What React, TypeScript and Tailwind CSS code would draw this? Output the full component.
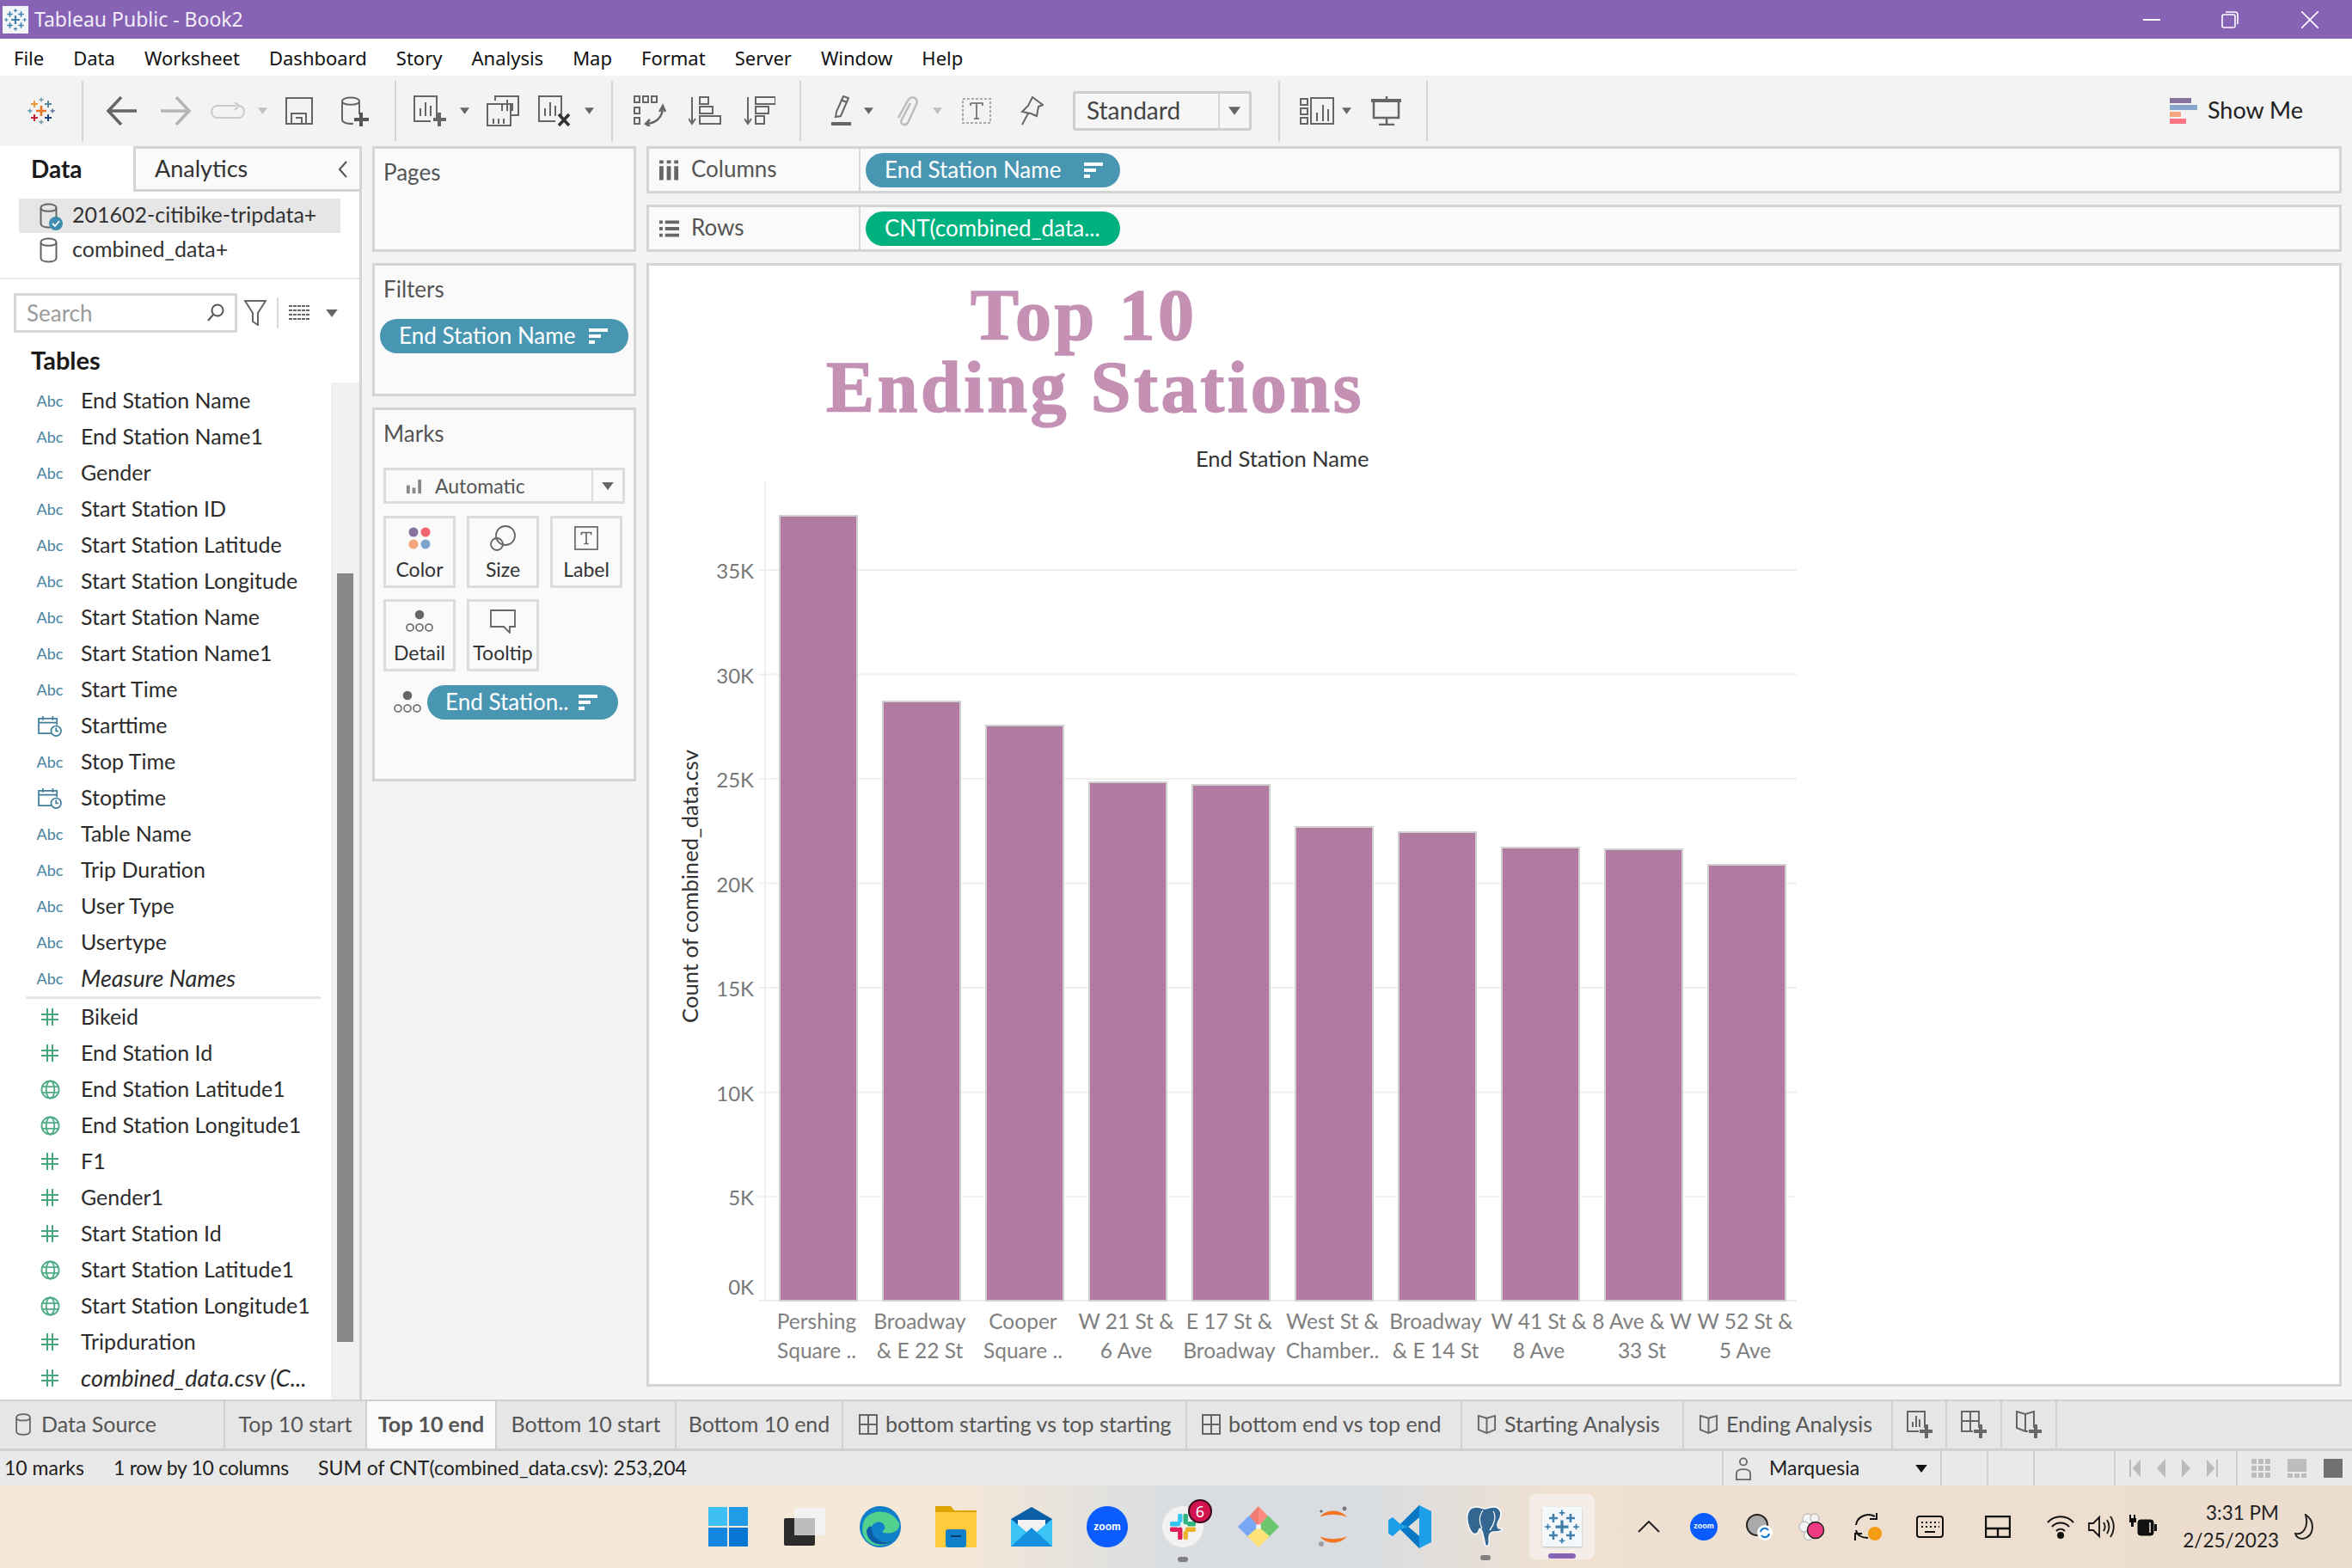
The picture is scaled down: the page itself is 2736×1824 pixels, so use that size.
import React from "react";

const FONT = "font-['Lato','Liberation_Sans',sans-serif]";
const UI = "font-['Noto_Sans','Liberation_Sans',sans-serif]";
const ICON = "#666666";

function Cross({ x, y, s, w, c }: { x: number; y: number; s: number; w: number; c: string }) {
  return <path d={`M${x - s} ${y}H${x + s}M${x} ${y - s}V${y + s}`} stroke={c} strokeWidth={w} fill="none" />;
}

function TableauLogo({ mono, className }: { mono?: string; className: string }) {
  const c = (v: string) => mono ?? v;
  return (
    <svg viewBox="0 0 32 32" className={className}>
      <Cross x={16} y={16} s={6} w={2.6} c={c("#e8762c")} />
      <Cross x={8} y={8} s={4} w={2} c={c("#eb9a35")} />
      <Cross x={24} y={8} s={4} w={2} c={c("#5b879b")} />
      <Cross x={8} y={24} s={4} w={2} c={c("#c72035")} />
      <Cross x={24} y={24} s={4} w={2} c={c("#1f447a")} />
      <Cross x={16} y={3} s={2.6} w={1.4} c={c("#7099a6")} />
      <Cross x={16} y={29} s={2.6} w={1.4} c={c("#7099a6")} />
      <Cross x={2.8} y={16} s={2.6} w={1.4} c={c("#5b9bb5")} />
      <Cross x={29.2} y={16} s={2.6} w={1.4} c={c("#5b6f9b")} />
    </svg>
  );
}

function Caret({ c = ICON, className = "w-[12px] h-[8px]" }: { c?: string; className?: string }) {
  return (
    <svg viewBox="0 0 12 8" className={className}>
      <path d="M0 0H12L6 8Z" fill={c} />
    </svg>
  );
}

function Sep({ className }: { className: string }) {
  return <div className={`w-[2px] h-[70px] bg-[#d4d4d4] shrink-0 ${className}`} />;
}

function Cylinder({ className, c = ICON }: { className: string; c?: string }) {
  return (
    <svg viewBox="0 0 20 32" className={className} fill="none" stroke={c} strokeWidth="2">
      <path d="M1 7C1 1 19 1 19 7V25C19 31 1 31 1 25Z" />
      <path d="M1 7C1 12 19 12 19 7" />
    </svg>
  );
}

function SortBars({ c = "#ffffff" }: { c?: string }) {
  return (
    <svg viewBox="0 0 22 18" className="w-[22px] h-[18px] shrink-0">
      <rect x="0" y="0" width="22" height="4" fill={c} />
      <rect x="0" y="7" width="14" height="4" fill={c} />
      <rect x="0" y="14" width="7" height="4" fill={c} />
    </svg>
  );
}

function BarsSheet({ mark }: { mark: "plus" | "x" }) {
  return (
    <svg viewBox="0 0 38 36" className="w-[38px] h-[36px]" fill="none" stroke={ICON} strokeWidth="2">
      <path d="M27 27V1H1V30H20" />
      <path d="M8 24V15M14 24V8M20 24V12" />
      {mark === "plus" ? (
        <path d="M30 20V36M23 28H38" strokeWidth="4" />
      ) : (
        <path d="M24 22L36 35M36 22L24 35" strokeWidth="3.5" stroke="#333" />
      )}
    </svg>
  );
}

function Toolbar() {
  return (
    <div className="h-[81px] bg-[#f3f3f3] flex items-center shrink-0 pl-[32px]">
      <TableauLogo className="w-[32px] h-[32px]" />
      <Sep className="ml-[31px]" />
      <svg viewBox="0 0 36 34" className="w-[36px] h-[34px] ml-[26px]" fill="none" stroke={ICON} strokeWidth="3.5">
        <path d="M36 17H3M18 1L3 17L18 33" />
      </svg>
      <svg viewBox="0 0 36 34" className="w-[36px] h-[34px] ml-[28px]" fill="none" stroke="#b4b4b4" strokeWidth="3.5">
        <path d="M0 17H33M18 1L33 17L18 33" />
      </svg>
      <svg viewBox="0 0 40 20" className="w-[40px] h-[20px] ml-[22px]" fill="none" stroke="#c8c8c8" strokeWidth="2">
        <path d="M30 4H8C-1 4 -1 18 8 18H32C41 18 41 4 33 4M28 0L33 4L28 9" />
      </svg>
      <Caret c="#c0c0c0" className="w-[11px] h-[8px] ml-[15px]" />
      <svg viewBox="0 0 32 32" className="w-[32px] h-[32px] ml-[21px]" fill="none" stroke={ICON} strokeWidth="2">
        <path d="M1 1H31V31H1Z" />
        <path d="M7 31V19H24V31M12 24H19V31" />
      </svg>
      <svg viewBox="0 0 32 36" className="w-[32px] h-[36px] ml-[33px]" fill="none" stroke={ICON} strokeWidth="2">
        <path d="M1 7C1 1 21 1 21 7V22M1 7C1 12 21 12 21 7M1 7V28C1 32 8 33 14 33" />
        <path d="M23 20V36M15 28H32" strokeWidth="4" stroke="#555" />
      </svg>
      <Sep className="ml-[30px]" />
      <div className="ml-[20px]"><BarsSheet mark="plus" /></div>
      <Caret className="w-[11px] h-[8px] ml-[16px]" />
      <svg viewBox="0 0 38 36" className="w-[38px] h-[36px] ml-[20px]" fill="none" stroke={ICON} strokeWidth="2">
        <path d="M10 6V1H37V23H28M1 10H28V35H1Z" />
        <path d="M18 18V10M24 18V5M30 18V9M8 33V27M14 33V27M20 33V27" />
      </svg>
      <div className="ml-[22px]"><BarsSheet mark="x" /></div>
      <Caret className="w-[11px] h-[8px] ml-[16px]" />
      <Sep className="ml-[20px]" />
      <svg viewBox="0 0 38 36" className="w-[38px] h-[36px] ml-[24px]" fill="none" stroke={ICON} strokeWidth="2">
        <path d="M1 1H7V8H1ZM11 1H17V8H11ZM21 1H27V8H21ZM1 14H7V21H1ZM1 26H7V33H1Z" />
        <path d="M15 33C26 32 33 26 34 15M30 19L34 12L37 19M19 28L14 33L19 36" strokeWidth="2.5" />
      </svg>
      <svg viewBox="0 0 38 34" className="w-[38px] h-[34px] ml-[26px]" fill="none" stroke={ICON} strokeWidth="2">
        <path d="M4 1V30M0 26L4 32L8 26" />
        <path d="M13 1H23V9H13ZM13 12H28V20H13ZM13 23H37V32H13Z" />
      </svg>
      <svg viewBox="0 0 36 34" className="w-[36px] h-[34px] ml-[27px]" fill="none" stroke={ICON} strokeWidth="2">
        <path d="M4 1V30M0 26L4 32L8 26" />
        <path d="M13 1H36V9H13ZM13 12H28V20H13ZM13 23H23V32H13Z" />
      </svg>
      <Sep className="ml-[28px]" />
      <svg viewBox="0 0 26 36" className="w-[26px] h-[36px] ml-[33px]" fill="none" stroke={ICON} strokeWidth="2">
        <path d="M16 1L22 3L13 24L7 25L8 19ZM13 5L20 8" />
        <path d="M2 33H25" strokeWidth="4" />
      </svg>
      <Caret className="w-[11px] h-[8px] ml-[14px]" />
      <svg viewBox="0 0 28 36" className="w-[28px] h-[36px] ml-[24px]" fill="none" stroke="#bcbcbc" strokeWidth="2.5">
        <path d="M19 9L9 28C6 34 14 37 17 30L26 10C29 3 20 -1 16 6L5 26" />
      </svg>
      <Caret c="#c0c0c0" className="w-[11px] h-[8px] ml-[17px]" />
      <svg viewBox="0 0 34 30" className="w-[34px] h-[30px] ml-[23px]" fill="none">
        <rect x="1" y="1" width="32" height="28" stroke="#aaa" strokeWidth="2" strokeDasharray="3 2" />
        <path d="M10 6H24V9M10 6V9M17 6V24M14 24H20" stroke="#666" strokeWidth="1.6" />
      </svg>
      <svg viewBox="0 0 28 34" className="w-[28px] h-[34px] ml-[33px]" fill="none" stroke={ICON} strokeWidth="2">
        <path d="M15 1L27 10L22 12L20 23L13 20L3 18L10 11ZM10 20L3 33" />
      </svg>
      <div className="ml-[34px] w-[208px] h-[46px] border-[3px] border-[#cfcfcf] rounded-[3px] flex items-center bg-[#f6f6f6]">
        <span className={`${FONT} text-[28px] text-[#444] pl-[13px] flex-1 -mt-[2px]`}>Standard</span>
        <div className="w-[36px] h-full border-l-2 border-[#d8d8d8] flex items-center justify-center">
          <Caret className="w-[14px] h-[10px]" />
        </div>
      </div>
      <Sep className="ml-[31px]" />
      <svg viewBox="0 0 40 32" className="w-[40px] h-[32px] ml-[23px]" fill="none" stroke={ICON} strokeWidth="2">
        <path d="M1 2H9V9H1ZM1 13H9V20H1ZM1 24H9V31H1ZM13 1H39V31H13Z" />
        <path d="M20 28V18M27 28V9M33 28V14" />
      </svg>
      <Caret className="w-[11px] h-[8px] ml-[9px]" />
      <svg viewBox="0 0 36 34" className="w-[36px] h-[34px] ml-[23px]" fill="none" stroke={ICON} strokeWidth="2.5">
        <path d="M0 5H35" strokeWidth="4" />
        <path d="M3 7V25H32V7M18 0V3M18 25V33M9 33H27" />
      </svg>
      <Sep className="ml-[28px]" />
      <div className="ml-auto mr-[57px] flex items-center gap-[12px]">
        <svg viewBox="0 0 32 30" className="w-[32px] h-[30px]">
          <rect x="0" y="0" width="25" height="6" fill="#86729a" />
          <rect x="0" y="8" width="32" height="6" fill="#86a5c9" />
          <rect x="0" y="16" width="13" height="6" fill="#f4a77f" />
          <rect x="0" y="24" width="19" height="6" fill="#fb7485" />
        </svg>
        <span className={`${FONT} text-[27px] text-[#222]`}>Show Me</span>
      </div>
    </div>
  );
}

const stringFields = ["End Station Name", "End Station Name1", "Gender", "Start Station ID", "Start Station Latitude", "Start Station Longitude", "Start Station Name", "Start Station Name1", "Start Time", "Starttime", "Stop Time", "Stoptime", "Table Name", "Trip Duration", "User Type", "Usertype", "Measure Names"];
const numberFields = ["Bikeid", "End Station Id", "End Station Latitude1", "End Station Longitude1", "F1", "Gender1", "Start Station Id", "Start Station Latitude1", "Start Station Longitude1", "Tripduration", "combined_data.csv (C..."];
const geoFields = ["End Station Latitude1", "End Station Longitude1", "Start Station Latitude1", "Start Station Longitude1"];

function FieldIcon({ name, measure }: { name: string; measure: boolean }) {
  if (measure && geoFields.includes(name)) {
    return (
      <svg viewBox="0 0 24 24" className="w-[23px] h-[23px]" fill="none" stroke="#4fac87" strokeWidth="2">
        <circle cx="12" cy="12" r="10.5" />
        <ellipse cx="12" cy="12" rx="5" ry="10.5" />
        <path d="M2 8.5H22M2 15.5H22" />
      </svg>
    );
  }
  if (measure) {
    return (
      <svg viewBox="0 0 20 20" className="w-[20px] h-[20px]" fill="none" stroke="#4aa57e" strokeWidth="2">
        <path d="M7 0V20M13 0V20M0 7H20M0 13H20" />
      </svg>
    );
  }
  if (name === "Starttime" || name === "Stoptime") {
    return (
      <svg viewBox="0 0 30 26" className="w-[29px] h-[25px]" fill="none" stroke="#3f7f9c" strokeWidth="1.8">
        <path d="M16 22H1V4H23V12M1 9H23M6 1V6M18 1V6" />
        <circle cx="22" cy="19" r="6" fill="#ffffff" />
        <path d="M22 15V19H25" />
      </svg>
    );
  }
  return <span className={`${FONT} text-[18px] text-[#4682a0]`}>Abc</span>;
}

function Field({ name, measure }: { name: string; measure: boolean }) {
  const italic = name === "Measure Names" || name.startsWith("combined_data");
  return (
    <div className="h-[42px] flex items-center">
      <div className="w-[36px] ml-[40px] flex justify-center shrink-0">
        <FieldIcon name={name} measure={measure} />
      </div>
      <span className={`${FONT} text-[#2b2b2b] ml-[18px] whitespace-nowrap ${italic ? "italic text-[27px]" : "text-[25px]"}`}>{name}</span>
    </div>
  );
}

function LeftPanel() {
  return (
    <div className="w-[421px] shrink-0 bg-white border-r-[3px] border-[#d4d4d4] flex flex-col">
      <div className="h-[53px] flex shrink-0">
        <div className={`${FONT} w-[155px] pl-[36px] pb-[2px] flex items-center text-[28px] font-bold text-[#1a1a1a]`}>Data</div>
        <div className={`${FONT} flex-1 bg-[#fafafa] border-l-[3px] border-t-[3px] border-b-[3px] border-[#d4d4d4] pl-[22px] pr-[14px] flex items-center justify-between text-[27px] text-[#333]`}>
          <span>Analytics</span>
          <svg viewBox="0 0 10 20" className="w-[10px] h-[20px]" fill="none" stroke="#555" strokeWidth="2">
            <path d="M9 1L1 10L9 19" />
          </svg>
        </div>
      </div>
      <div className="mt-[8px] mx-[22px] h-[40px] bg-[#e6e6e6] flex items-center pl-[23px] relative">
        <Cylinder className="w-[23px] h-[32px]" />
        <svg viewBox="0 0 16 16" className="w-[16px] h-[16px] absolute left-[35px] top-[21px]">
          <circle cx="8" cy="8" r="8" fill="#3e8cae" />
          <path d="M4 8L7 11L12 5" stroke="#fff" strokeWidth="1.8" fill="none" />
        </svg>
        <span className={`${FONT} text-[25px] text-[#333] ml-[16px] -mt-[2px]`}>201602-citibike-tripdata+</span>
      </div>
      <div className="mx-[22px] h-[40px] flex items-center pl-[23px]">
        <Cylinder className="w-[23px] h-[32px]" />
        <span className={`${FONT} text-[25px] text-[#333] ml-[16px] -mt-[2px]`}>combined_data+</span>
      </div>
      <div className="mt-[12px] h-[2px] bg-[#e8e8e8] shrink-0" />
      <div className="mt-[16px] h-[46px] flex items-center pl-[16px] shrink-0">
        <div className="w-[260px] h-full border-[3px] border-[#d6d6d6] rounded-[2px] flex items-center justify-between px-[12px]">
          <span className={`${FONT} text-[26px] text-[#9b9b9b]`}>Search</span>
          <svg viewBox="0 0 20 22" className="w-[20px] h-[22px]" fill="none" stroke="#555" strokeWidth="2">
            <circle cx="12" cy="8" r="6.5" />
            <path d="M7 13L1 20" />
          </svg>
        </div>
        <svg viewBox="0 0 26 30" className="w-[26px] h-[30px] ml-[8px]" fill="none" stroke="#666" strokeWidth="2">
          <path d="M1 1H25L16 15V29L10 25V15Z" />
        </svg>
        <div className="w-[2px] h-[36px] bg-[#d8d8d8] ml-[12px]" />
        <svg viewBox="0 0 24 20" className="w-[24px] h-[20px] ml-[12px]" stroke="#666" strokeWidth="2">
          <path d="M0 2H24M0 7H24M0 12H24M0 17H24" strokeDasharray="4 1" />
        </svg>
        <Caret className="w-[14px] h-[9px] ml-[19px]" />
      </div>
      <div className={`${FONT} h-[58px] pl-[36px] pt-[6px] flex items-center text-[29px] font-bold text-[#1a1a1a] shrink-0`}>Tables</div>
      <div className="flex-1 flex min-h-0">
        <div className="flex-1 min-w-0 flex flex-col">
          {stringFields.map((f) => (
            <Field key={f} name={f} measure={false} />
          ))}
          <div className="ml-[30px] mr-[12px] h-[3px] bg-[#e6e6e6] shrink-0" />
          {numberFields.map((f) => (
            <Field key={f} name={f} measure={true} />
          ))}
        </div>
        <div className="w-[33px] bg-[#f0f0f0] shrink-0 pl-[7px] pr-[7px] pt-[222px]">
          <div className="h-[894px] bg-[#888888]" />
        </div>
      </div>
    </div>
  );
}

function MarkButton({ label, children }: { label: string; children: React.ReactNode }) {
  return (
    <div className="w-[84px] h-[84px] border-[3px] border-[#dcdcdc] bg-[#fafafa] flex flex-col items-center pt-[6px]">
      <div className="h-[34px] flex items-center justify-center">{children}</div>
      <span className={`${FONT} text-[23px] text-[#333] mt-[5px] leading-[28px] whitespace-nowrap`}>{label}</span>
    </div>
  );
}

function DetailDots() {
  return (
    <svg viewBox="0 0 32 28" className="w-[32px] h-[28px] shrink-0" fill="none" stroke="#666" strokeWidth="1.6">
      <circle cx="16" cy="6" r="4.5" fill="#666" />
      <circle cx="5" cy="21" r="4" />
      <circle cx="16" cy="21" r="4" />
      <circle cx="27" cy="21" r="4" />
    </svg>
  );
}

function Pill({ label, className, sort = true }: { label: string; className: string; sort?: boolean }) {
  return (
    <div className={`${FONT} h-[40px] rounded-[20px] flex items-center text-white text-[26px] whitespace-nowrap ${className}`}>
      <span className="flex-1 -mt-[1px]">{label}</span>
      {sort && <SortBars />}
    </div>
  );
}

function MiddleColumn() {
  const title = `${FONT} text-[26px] text-[#555] leading-[30px]`;
  return (
    <div className="w-[307px] ml-[12px] shrink-0 flex flex-col">
      <div className="h-[123px] border-[3px] border-[#d4d4d4] bg-[#fafafa] pl-[10px] pt-[12px] shrink-0">
        <div className={title}>Pages</div>
      </div>
      <div className="mt-[13px] h-[155px] border-[3px] border-[#d4d4d4] bg-[#fafafa] px-[6px] pt-[12px] shrink-0">
        <div className={`${title} pl-[4px]`}>Filters</div>
        <Pill label="End Station Name" className="mt-[20px] bg-[#4996b2] pl-[22px] pr-[24px]" />
      </div>
      <div className="mt-[13px] h-[435px] border-[3px] border-[#d4d4d4] bg-[#fafafa] px-[10px] pt-[12px] shrink-0">
        <div className={title}>Marks</div>
        <div className="mt-[25px] h-[42px] border-[3px] border-[#dcdcdc] flex items-center">
          <svg viewBox="0 0 20 20" className="w-[19px] h-[19px] ml-[23px]" fill="#888">
            <rect x="1" y="9" width="4" height="10" />
            <rect x="8" y="12" width="4" height="7" />
            <rect x="15" y="2" width="4" height="17" />
          </svg>
          <span className={`${FONT} text-[23px] text-[#555] ml-[15px] flex-1`}>Automatic</span>
          <div className="w-[36px] h-full border-l-2 border-[#dcdcdc] flex items-center justify-center">
            <Caret className="w-[14px] h-[9px]" />
          </div>
        </div>
        <div className="mt-[14px] flex gap-[13px]">
          <MarkButton label="Color">
            <svg viewBox="0 0 26 26" className="w-[26px] h-[26px]">
              <circle cx="6" cy="6" r="5.5" fill="#86729a" />
              <circle cx="20" cy="6" r="5.5" fill="#f0636f" />
              <circle cx="6" cy="20" r="5.5" fill="#f2a679" />
              <circle cx="20" cy="20" r="5.5" fill="#7ea4cc" />
            </svg>
          </MarkButton>
          <MarkButton label="Size">
            <svg viewBox="0 0 30 30" className="w-[30px] h-[30px]" fill="none" stroke="#666" strokeWidth="1.8">
              <circle cx="18" cy="12" r="11" />
              <circle cx="8" cy="22" r="7" />
            </svg>
          </MarkButton>
          <MarkButton label="Label">
            <svg viewBox="0 0 30 30" className="w-[28px] h-[28px]" fill="none" stroke="#666" strokeWidth="1.8">
              <rect x="1" y="1" width="28" height="28" />
              <path d="M9 8H21V11M9 8V11M15 8V22M12 22H18" />
            </svg>
          </MarkButton>
        </div>
        <div className="mt-[13px] flex gap-[13px]">
          <MarkButton label="Detail">
            <DetailDots />
          </MarkButton>
          <MarkButton label="Tooltip">
            <svg viewBox="0 0 30 28" className="w-[30px] h-[28px]" fill="none" stroke="#666" strokeWidth="1.8">
              <path d="M1 1H29V20H23V27L16 20H1Z" />
            </svg>
          </MarkButton>
        </div>
        <div className="mt-[16px] flex items-center pl-[12px]">
          <DetailDots />
          <Pill label="End Station.." className="ml-[7px] w-[222px] shrink-0 bg-[#4996b2] pl-[21px] pr-[24px]" />
        </div>
      </div>
    </div>
  );
}

function Shelf({ label, icon, pill, color }: { label: string; icon: React.ReactNode; pill: string; color: string }) {
  return (
    <div className="h-[55px] border-[3px] border-[#d4d4d4] bg-[#fafafa] flex items-center shrink-0">
      <div className="w-[246px] h-full border-r-2 border-[#d8d8d8] flex items-center pl-[12px] shrink-0">
        {icon}
        <span className={`${FONT} text-[26px] text-[#555] ml-[14px] -mt-[2px]`}>{label}</span>
      </div>
      <div className="pl-[6px]">
        <Pill label={pill} className={`w-[296px] pl-[22px] pr-[20px] ${color}`} sort={label === "Columns"} />
      </div>
    </div>
  );
}

const bars = [
  { top: 600, l: ["Pershing", "Square .."] },
  { top: 816, l: ["Broadway", "& E 22 St"] },
  { top: 844, l: ["Cooper", "Square .."] },
  { top: 910, l: ["W 21 St &", "6 Ave"] },
  { top: 913, l: ["E 17 St &", "Broadway"] },
  { top: 962, l: ["West St &", "Chamber.."] },
  { top: 968, l: ["Broadway", "& E 14 St"] },
  { top: 986, l: ["W 41 St &", "8 Ave"] },
  { top: 988, l: ["8 Ave & W", "33 St"] },
  { top: 1006, l: ["W 52 St &", "5 Ave"] },
];
const ticks = ["35K", "30K", "25K", "20K", "15K", "10K", "5K"];

function Chart() {
  const font = "Lato, 'Liberation Sans', sans-serif";
  return (
    <svg viewBox="755 560 1966 1050" className="w-[1966px] h-[1050px] block">
      <line x1="890" y1="560" x2="890" y2="1513" stroke="#f0f0f0" strokeWidth="2" />
      {ticks.map((t, i) => {
        const y = 663 + i * 121.5;
        return (
          <g key={t}>
            <line x1="882" y1={y} x2="2090" y2={y} stroke="#f0f0f0" strokeWidth="2" />
            <text x="877" y={y + 10} textAnchor="end" fontFamily={font} fontSize="24" fill="#777">{t}</text>
          </g>
        );
      })}
      <line x1="882" y1="1513" x2="2090" y2="1513" stroke="#eeeeee" strokeWidth="2" />
      <text x="877" y="1506" textAnchor="end" fontFamily={font} fontSize="24" fill="#777">0K</text>
      <text transform="translate(812 1031) rotate(-90)" textAnchor="middle" fontFamily={font} fontSize="25.6" fill="#333">Count of combined_data.csv</text>
      {bars.map((b, i) => {
        const x = 907 + i * 120;
        return (
          <g key={i}>
            <rect x={x} y={b.top} width={90} height={1513 - b.top} fill="#b07aa1" stroke="#d0d0d0" strokeWidth="2" />
            <text x={x + 43} y="1546" textAnchor="middle" fontFamily={font} fontSize="24.5" fill="#808080">{b.l[0]}</text>
            <text x={x + 43} y="1580" textAnchor="middle" fontFamily={font} fontSize="24.5" fill="#808080">{b.l[1]}</text>
          </g>
        );
      })}
    </svg>
  );
}

function RightColumn() {
  return (
    <div className="ml-[12px] w-[1972px] shrink-0 flex flex-col">
      <Shelf
        label="Columns"
        pill="End Station Name"
        color="bg-[#4996b2]"
        icon={
          <svg viewBox="0 0 24 24" className="w-[23px] h-[24px]" fill="#666">
            <path d="M0 0H5V4H0ZM9 0H14V4H9ZM18 0H23V4H18ZM0 7H5V24H0ZM9 7H14V24H9ZM18 7H23V24H18Z" />
          </svg>
        }
      />
      <div className="mt-[13px]">
        <Shelf
          label="Rows"
          pill="CNT(combined_data..."
          color="bg-[#00b180]"
          icon={
            <svg viewBox="0 0 24 20" className="w-[23px] h-[20px]" fill="#666">
              <path d="M0 0H4V4H0ZM7 0H24V4H7ZM0 8H4V12H0ZM7 8H24V12H7ZM0 16H4V20H0ZM7 16H24V20H7Z" />
            </svg>
          }
        />
      </div>
      <div className="mt-[13px] h-[1307px] border-[3px] border-[#d4d4d4] bg-white flex flex-col overflow-hidden">
        <div className="h-[251px] shrink-0 flex flex-col font-['Liberation_Serif',serif] font-bold text-[#c491b5] text-[84px] leading-[84px] tracking-[3.6px] [-webkit-text-stroke:1.5px_#c491b5]">
          <div className="ml-[374px] mt-[16px] whitespace-nowrap">Top 10</div>
          <div className="ml-[206px]">
            <span className="whitespace-nowrap">Ending Stations</span>
          </div>
          <div className={`${FONT} text-[25.5px] font-normal tracking-normal [-webkit-text-stroke:0px] text-[#333] leading-[30px] mt-[25px] ml-[636px]`}>End Station Name</div>
        </div>
        <Chart />
      </div>
    </div>
  );
}

const tabs = [
  { label: "Top 10 start", cls: "w-[165px]" },
  { label: "Top 10 end", cls: "w-[151px] bg-[#fafafa] font-bold" },
  { label: "Bottom 10 start", cls: "w-[209px]" },
  { label: "Bottom 10 end", cls: "w-[194px]" },
];

function GridIcon() {
  return (
    <svg viewBox="0 0 22 24" className="w-[22px] h-[24px] mr-[9px]" fill="none" stroke="#666" strokeWidth="2">
      <path d="M1 1H21V23H1ZM11 1V23M1 12H21" />
    </svg>
  );
}

function BookIcon() {
  return (
    <svg viewBox="0 0 24 24" className="w-[23px] h-[23px] mr-[9px]" fill="none" stroke="#666" strokeWidth="2">
      <path d="M2 2L12 5L22 2V19L12 23L2 19ZM12 5V23" />
    </svg>
  );
}

function TabBar() {
  const tabText = `${FONT} text-[25px] text-[#555] h-full flex items-center whitespace-nowrap border-r-2 border-[#d0d0d0] shrink-0 pb-[2px]`;
  return (
    <div className="h-[60px] bg-[#e6e6e6] border-t-2 border-b-[3px] border-[#d0d0d0] flex shrink-0">
      <div className={`${tabText} w-[262px] pl-[18px]`}>
        <Cylinder className="w-[18px] h-[28px] mr-[12px]" />
        Data Source
      </div>
      {tabs.map((t) => (
        <div key={t.label} className={`${tabText} ${t.cls} justify-center`}>{t.label}</div>
      ))}
      <div className={`${tabText} w-[400px] pl-[18px]`}>
        <GridIcon />
        bottom starting vs top starting
      </div>
      <div className={`${tabText} w-[320px] pl-[17px]`}>
        <GridIcon />
        bottom end vs top end
      </div>
      <div className={`${tabText} w-[258px] pl-[17px]`}>
        <BookIcon />
        Starting Analysis
      </div>
      <div className={`${tabText} w-[243px] pl-[17px]`}>
        <BookIcon />
        Ending Analysis
      </div>
      <div className={`${tabText} w-[63px] justify-center`}>
        <svg viewBox="0 0 30 32" className="w-[30px] h-[32px]" fill="none" stroke="#666" strokeWidth="2">
          <path d="M21 20V1H1V24H14M7 19V13M11 19V6M15 19V10" />
          <path d="M23 16V32M15 24H30" strokeWidth="4" />
        </svg>
      </div>
      <div className={`${tabText} w-[64px] justify-center`}>
        <svg viewBox="0 0 30 32" className="w-[30px] h-[32px]" fill="none" stroke="#666" strokeWidth="2">
          <path d="M21 20V1H1V24H14M11 1V24M1 12H21" />
          <path d="M23 16V32M15 24H30" strokeWidth="4" />
        </svg>
      </div>
      <div className={`${tabText} w-[64px] justify-center`}>
        <svg viewBox="0 0 30 32" className="w-[30px] h-[32px]" fill="none" stroke="#666" strokeWidth="2">
          <path d="M21 20V1L11 4L1 1V20L11 24H14M11 4V24" />
          <path d="M23 16V32M15 24H30" strokeWidth="4" />
        </svg>
      </div>
    </div>
  );
}

function StatusBar() {
  const seg = "h-full border-l-2 border-[#d0d0d0] shrink-0";
  return (
    <div className={`${FONT} h-[40px] bg-[#e9e9e9] flex items-center text-[23px] text-[#222] shrink-0`}>
      <span className="ml-[5px] w-[127px] whitespace-nowrap -mt-[2px]">10 marks</span>
      <span className="w-[238px] whitespace-nowrap -mt-[2px] tracking-[-0.3px]">1 row by 10 columns</span>
      <span className="w-[1633px] whitespace-nowrap -mt-[2px]">SUM of CNT(combined_data.csv): 253,204</span>
      <div className={`${seg} w-[254px] flex items-center pl-[13px]`}>
        <svg viewBox="0 0 22 30" className="w-[20px] h-[27px]" fill="none" stroke="#666" strokeWidth="2">
          <circle cx="11" cy="6" r="4.5" />
          <path d="M2 29V21C2 14 20 14 20 21V29Z" />
        </svg>
        <span className="ml-[20px] flex-1 -mt-[2px]">Marquesia</span>
        <Caret c="#111" className="w-[14px] h-[9px] mr-[15px]" />
      </div>
      <div className={`${seg} w-[54px]`} />
      <div className={`${seg} w-[54px]`} />
      <div className={`${seg} w-[94px]`} />
      <div className={`${seg} w-[142px] flex items-center pl-[16px] gap-[19px]`}>
        <svg viewBox="0 0 14 22" className="w-[13px] h-[22px]" fill="#bbb"><path d="M0 0H2V22H0ZM14 0V22L4 11Z" /></svg>
        <svg viewBox="0 0 10 22" className="w-[10px] h-[22px]" fill="#bbb"><path d="M10 0V22L0 11Z" /></svg>
        <svg viewBox="0 0 10 22" className="w-[10px] h-[22px]" fill="#bbb"><path d="M0 0V22L10 11Z" /></svg>
        <svg viewBox="0 0 14 22" className="w-[13px] h-[22px]" fill="#bbb"><path d="M14 0H12V22H14ZM0 0V22L10 11Z" /></svg>
      </div>
      <div className={`${seg} flex-1 flex items-center pl-[16px] gap-[20px]`}>
        <svg viewBox="0 0 22 22" className="w-[22px] h-[22px]" fill="#bdbdbd">
          <path d="M0 0H6V6H0ZM8 0H14V6H8ZM16 0H22V6H16ZM0 8H6V14H0ZM8 8H14V14H8ZM16 8H22V14H16ZM0 16H6V22H0ZM8 16H14V22H8ZM16 16H22V22H16Z" />
        </svg>
        <svg viewBox="0 0 22 22" className="w-[22px] h-[22px]" fill="#bdbdbd">
          <path d="M0 0H22V15H0ZM0 17H6V22H0ZM8 17H14V22H8ZM16 17H22V22H16Z" />
        </svg>
        <div className="w-[22px] h-[22px] bg-[#707070]" />
      </div>
    </div>
  );
}

function Taskbar() {
  return (
    <div className="h-[96px] flex items-center shrink-0 bg-[linear-gradient(90deg,#f6e8d6_0%,#f6e8d6_40%,#d9dde1_50%,#d9dde1_58%,#efe0d1_66%,#ecdccd_100%)]">
      <svg viewBox="0 0 46 46" className="w-[46px] h-[46px] ml-[824px]">
        <rect x="0" y="0" width="22" height="22" fill="#3fc0f5" />
        <rect x="24" y="0" width="22" height="22" fill="#1f9be8" />
        <rect x="0" y="24" width="22" height="22" fill="#1488e0" />
        <rect x="24" y="24" width="22" height="22" fill="#0678d4" />
      </svg>
      <svg viewBox="0 0 48 44" className="w-[48px] h-[44px] ml-[42px]">
        <rect x="0" y="12" width="36" height="32" rx="2" fill="#2c2c2c" />
        <rect x="12" y="0" width="36" height="32" rx="2" fill="#f2f2f2" />
        <rect x="12" y="12" width="24" height="20" fill="#bdbdbd" />
      </svg>
      <svg viewBox="0 0 48 48" className="w-[48px] h-[48px] ml-[40px]">
        <circle cx="24" cy="24" r="24" fill="#0f7fc9" />
        <path d="M4 20C8 4 36 0 46 20C48 30 34 34 26 30C36 22 20 12 14 24C10 36 26 46 38 40C26 52 -2 46 4 20Z" fill="#52d08e" />
        <path d="M14 24C12 36 26 46 38 40C30 48 10 46 8 30C8 26 12 22 14 24Z" fill="#0c5ba8" />
      </svg>
      <svg viewBox="0 0 48 48" className="w-[48px] h-[48px] ml-[40px]">
        <path d="M0 0H18L22 5H48V48H0Z" fill="#e0a300" />
        <path d="M0 7H48V48H0Z" fill="#ffcb3d" />
        <rect x="12" y="27" width="24" height="21" rx="3" fill="#0f7fc9" />
        <rect x="18" y="34" width="12" height="2" fill="#063f70" />
      </svg>
      <svg viewBox="0 0 48 46" className="w-[48px] h-[46px] ml-[40px]">
        <path d="M0 14L24 0L48 14V46H0Z" fill="#0a5ea8" />
        <path d="M8 15H40V28L24 36L8 28Z" fill="#f2f2f2" />
        <path d="M0 14L24 34L48 14V46H0Z" fill="#3cc3f5" />
        <path d="M0 46L24 24L48 46Z" fill="#1490de" />
      </svg>
      <div className="ml-[40px] w-[48px] h-[48px] rounded-full bg-[#0b5cff] flex items-center justify-center text-white text-[12px] font-bold font-['Liberation_Sans',sans-serif]">zoom</div>
      <div className="ml-[40px] w-[48px] h-[48px] rounded-full bg-[#f2f2f2] flex items-center justify-center relative">
        <svg viewBox="0 0 28 28" className="w-[30px] h-[30px]">
          <path d="M2 11H9M11 2V7" stroke="#36c5f0" strokeWidth="5" strokeLinecap="round" />
          <path d="M17 2V9M21 11H26" stroke="#2eb67d" strokeWidth="5" strokeLinecap="round" />
          <path d="M2 17H7M11 17V26" stroke="#e01e5a" strokeWidth="5" strokeLinecap="round" />
          <path d="M19 17H26M17 21V26" stroke="#ecb22e" strokeWidth="5" strokeLinecap="round" />
        </svg>
        <div className="absolute -top-[8px] right-[-10px] w-[28px] h-[28px] rounded-full bg-[#d1134f] border-2 border-[#3a0a1e] text-white text-[18px] flex items-center justify-center font-['Noto_Sans',sans-serif]">6</div>
        <div className="absolute -bottom-[17px] left-[18px] w-[12px] h-[6px] rounded-full bg-[#808080]" />
      </div>
      <svg viewBox="0 0 48 48" className="w-[48px] h-[48px] ml-[40px]">
        <path d="M24 0L35 12L24 24Z" fill="#ff8a80" />
        <path d="M24 0L13 12L24 24Z" fill="#ef7c72" />
        <path d="M0 24L13 11L24 24L13 37Z" fill="#7aa7f5" />
        <path d="M48 24L35 11L24 24L35 37Z" fill="#6cc66e" />
        <path d="M24 48L11 35L24 24L37 35Z" fill="#ffe27a" />
        <circle cx="24" cy="24" r="3" fill="#f2f2f2" />
      </svg>
      <svg viewBox="0 0 38 48" className="w-[38px] h-[48px] ml-[44px]">
        <path d="M3 13C10 3 28 3 35 13C28 9 10 9 3 13Z" fill="#f37726" />
        <path d="M3 35C10 45 28 45 35 35C28 39 10 39 3 35Z" fill="#f37726" />
        <circle cx="32" cy="3" r="2.4" fill="#767677" />
        <circle cx="5" cy="6" r="1.6" fill="#616262" />
        <circle cx="5" cy="44" r="3" fill="#9e9e9e" />
      </svg>
      <svg viewBox="0 0 50 50" className="w-[50px] h-[50px] ml-[45px]">
        <path d="M36 0L50 7V43L36 50L14 28L5 36L0 33V17L5 14L14 22ZM36 14L23 25L36 36Z" fill="#1c9fe8" />
        <path d="M36 0V14L23 25L14 22Z M14 28L23 25L36 36V50Z" fill="#0a78c4" />
      </svg>
      <div className="ml-[40px] w-[46px] h-[48px] relative shrink-0">
        <svg viewBox="0 0 46 48" className="w-[46px] h-[48px]">
          <path d="M12 1C2 1 0 12 3 22C5 30 9 34 13 32C16 30 15 26 17 26C20 28 21 38 23 46C26 48 28 44 27 38C27 32 29 30 33 30C42 30 45 26 40 26C37 26 36 22 38 18C44 8 40 1 32 1C28 1 25 3 22 3C18 2 16 1 12 1Z" fill="#336791" stroke="#ffffff" strokeWidth="1.5" />
          <path d="M20 5C15 12 16 20 19 26M32 6C36 12 33 22 28 28" fill="none" stroke="#ffffff" strokeWidth="1.2" />
        </svg>
        <div className="absolute -bottom-[15px] left-[17px] w-[12px] h-[6px] rounded-full bg-[#808080]" />
      </div>
      <div className="ml-[28px] w-[76px] h-[76px] rounded-[8px] bg-[#f5eee8] flex flex-col items-center relative shrink-0">
        <div className="mt-[15px] w-[46px] h-[46px] bg-[#f5f8fa] shadow-[0_1px_2px_#bbb] flex items-center justify-center">
          <TableauLogo mono="#3f7fad" className="w-[40px] h-[40px]" />
        </div>
        <div className="absolute bottom-[1px] left-[22px] w-[32px] h-[6px] rounded-full bg-[#8763b5]" />
      </div>
      <svg viewBox="0 0 26 14" className="w-[26px] h-[14px] ml-[50px]" fill="none" stroke="#222" strokeWidth="2">
        <path d="M1 13L13 1L25 13" />
      </svg>
      <div className="ml-[35px] w-[32px] h-[32px] rounded-full bg-[#0b5cff] flex items-center justify-center text-white text-[9px] font-bold font-['Liberation_Sans',sans-serif]">zoom</div>
      <svg viewBox="0 0 32 32" className="w-[32px] h-[32px] ml-[32px]">
        <circle cx="14" cy="14" r="12" fill="#aaa" stroke="#222" strokeWidth="2" />
        <circle cx="23" cy="23" r="9" fill="#fff" />
        <path d="M18 22A5 5 0 0 1 27 20M28 24A5 5 0 0 1 19 26" fill="none" stroke="#0a78d4" strokeWidth="2" />
      </svg>
      <svg viewBox="0 0 32 32" className="w-[32px] h-[32px] ml-[30px]">
        <circle cx="11" cy="7" r="6" fill="#f4f4f4" stroke="#aaa" />
        <circle cx="19" cy="6" r="5" fill="#f4f4f4" stroke="#aaa" />
        <circle cx="7" cy="16" r="6" fill="#f4f4f4" stroke="#aaa" />
        <circle cx="12" cy="26" r="5.5" fill="#f4f4f4" stroke="#aaa" />
        <circle cx="20" cy="20" r="9.5" fill="#ee3a82" stroke="#222" strokeWidth="1.5" />
      </svg>
      <svg viewBox="0 0 32 32" className="w-[32px] h-[32px] ml-[33px]">
        <path d="M2 14C3 5 14 -1 24 4M26 0V7H18M16 29C9 29 3 26 2 20M1 32V24H9" fill="none" stroke="#111" strokeWidth="2" />
        <circle cx="24" cy="24" r="8" fill="#f39c12" />
      </svg>
      <svg viewBox="0 0 32 26" className="w-[32px] h-[26px] ml-[40px]" fill="none" stroke="#111" strokeWidth="2">
        <rect x="1" y="1" width="30" height="24" rx="3" />
        <path d="M6 8H8M11 8H13M16 8H18M21 8H23M26 8H27M6 13H8M11 13H13M16 13H18M21 13H23M26 13H27M10 19H22" />
      </svg>
      <svg viewBox="0 0 30 26" className="w-[30px] h-[26px] ml-[48px]" fill="none" stroke="#111" strokeWidth="2.4">
        <path d="M1 1H29V25H1ZM1 15H29M15 15V25" />
      </svg>
      <svg viewBox="0 0 32 28" className="w-[32px] h-[28px] ml-[42px]" fill="none" stroke="#111" strokeWidth="2">
        <path d="M1 9C9 0 23 0 31 9M6 14C11 8 21 8 26 14M11 19C14 16 18 16 21 19" />
        <circle cx="16" cy="24" r="3" fill="#111" />
      </svg>
      <svg viewBox="0 0 32 28" className="w-[32px] h-[28px] ml-[16px]" fill="none" stroke="#111" strokeWidth="1.8">
        <path d="M1 10H6L13 3V25L6 18H1ZM18 9C20 12 20 16 18 19M22 6C25 11 25 17 22 22M26 2C31 9 31 19 26 26" />
      </svg>
      <svg viewBox="0 0 32 28" className="w-[32px] h-[28px] ml-[16px]">
        <path d="M1 0V4M6 0V4" stroke="#111" strokeWidth="2" />
        <path d="M0 4H8V9H5V14H2V9H0Z" fill="#111" />
        <rect x="10" y="6" width="18" height="18" rx="3" fill="#111" stroke="#111" />
        <path d="M24 9V21" stroke="#eddccd" strokeWidth="1.6" />
        <rect x="29" y="11" width="3" height="8" fill="#111" />
      </svg>
      <div className={`${FONT} ml-[22px] w-[120px] text-right text-[22.5px] text-[#222] leading-[32px]`}>
        <div>3:31 PM</div>
        <div>2/25/2023</div>
      </div>
      <svg viewBox="0 0 26 30" className="w-[26px] h-[30px] ml-[18px]" fill="none" stroke="#222" strokeWidth="2">
        <path d="M13 1C24 8 24 26 10 29C5 29 2 27 1 23C10 25 17 15 13 1Z" />
      </svg>
    </div>
  );
}

export default function App() {
  return (
    <div className="w-[2736px] h-[1824px] flex flex-col overflow-hidden bg-[#f3f3f3]">
      <div className="h-[45px] bg-[#8763b5] flex items-center shrink-0">
        <div className="ml-[3px] w-[30px] h-[32px] bg-[#f2f6f9] flex items-center justify-center">
          <TableauLogo mono="#3f7fad" className="w-[26px] h-[26px]" />
        </div>
        <span className={`${UI} ml-[7px] text-[23px] text-[#f2eef7]`}>Tableau Public - Book2</span>
        <svg viewBox="0 0 20 2" className="w-[20px] h-[2px] ml-auto"><rect width="20" height="2" fill="#fff" /></svg>
        <svg viewBox="0 0 20 20" className="w-[20px] h-[20px] ml-[71px]" fill="none" stroke="#fff" strokeWidth="1.6">
          <rect x="1" y="4" width="15" height="15" rx="2" />
          <path d="M5 1H16C18 1 19 2 19 4V15" />
        </svg>
        <svg viewBox="0 0 20 20" className="w-[20px] h-[20px] ml-[73px] mr-[39px]" fill="none" stroke="#fff" strokeWidth="1.6">
          <path d="M0 0L20 20M20 0L0 20" />
        </svg>
      </div>
      <div className={`${UI} h-[43px] bg-white flex items-center gap-[34px] pl-[16px] pt-[2px] text-[22px] text-[#111] shrink-0`}>
        {["File", "Data", "Worksheet", "Dashboard", "Story", "Analysis", "Map", "Format", "Server", "Window", "Help"].map((m) => (
          <span key={m}>{m}</span>
        ))}
      </div>
      <Toolbar />
      <div className="h-[1459px] flex shrink-0 pt-[1px]">
        <LeftPanel />
        <MiddleColumn />
        <RightColumn />
      </div>
      <TabBar />
      <StatusBar />
      <Taskbar />
    </div>
  );
}
